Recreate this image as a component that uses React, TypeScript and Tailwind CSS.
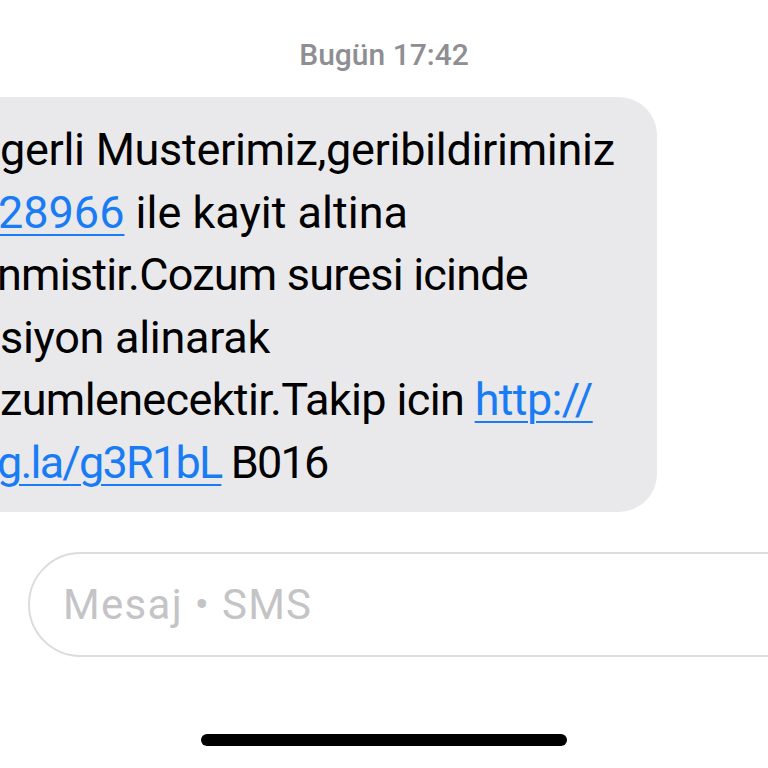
export default function App() {
  const font = { fontFamily: '"Roboto", "Noto Sans", sans-serif' };

  return (
    <div className="w-[768px] h-[768px] bg-white overflow-hidden flex flex-col" style={font}>
      {/* tarih */}
      <div className="pt-[37px] h-[97px] text-center text-[30px] leading-[36px] font-medium text-[#8e8e93]">
        Bugün 17:42
      </div>

      {/* gelen mesaj balonu */}
      <div className="ml-[-48px] w-[705px] bg-[#e9e9eb] rounded-[38px] pl-[48px] pr-[20px] pt-[22px] pb-[18px] text-[45px] leading-[62.5px] tracking-[-0.3px] text-black">
        <div className="whitespace-nowrap">gerli Musterimiz,geribildiriminiz</div>
        <div className="whitespace-nowrap -ml-[2px] tracking-[0px]">
          <span className="text-[#1a7cf5] underline decoration-[2px] underline-offset-[6px]">28966</span> ile kayit altina
        </div>
        <div className="whitespace-nowrap -ml-[3px] tracking-[-0.8px]">nmistir.Cozum suresi icinde</div>
        <div className="whitespace-nowrap">siyon alinarak</div>
        <div className="whitespace-nowrap tracking-[-0.65px]">
          zumlenecektir.Takip icin{" "}
          <span className="text-[#1a7cf5] underline decoration-[2px] underline-offset-[6px]">http://</span>
        </div>
        <div className="whitespace-nowrap -ml-[3px] tracking-[-1.8px]">
          <span className="text-[#1a7cf5] underline decoration-[2px] underline-offset-[6px]">g.la/g3R1bL</span> B016
        </div>
      </div>

      {/* mesaj girişi */}
      <div className="mt-[40px] ml-[28px] w-[800px] h-[105px] rounded-l-full border-2 border-[#dcdcde] flex items-center pl-[33px]">
        <span className="text-[42px] tracking-[1.3px] text-[#c4c4c6]">Mesaj • SMS</span>
      </div>

      {/* home indicator */}
      <div className="flex-1 flex justify-center pt-[77px]">
        <div className="w-[366px] h-[12px] rounded-full bg-black" />
      </div>
    </div>
  );
}
